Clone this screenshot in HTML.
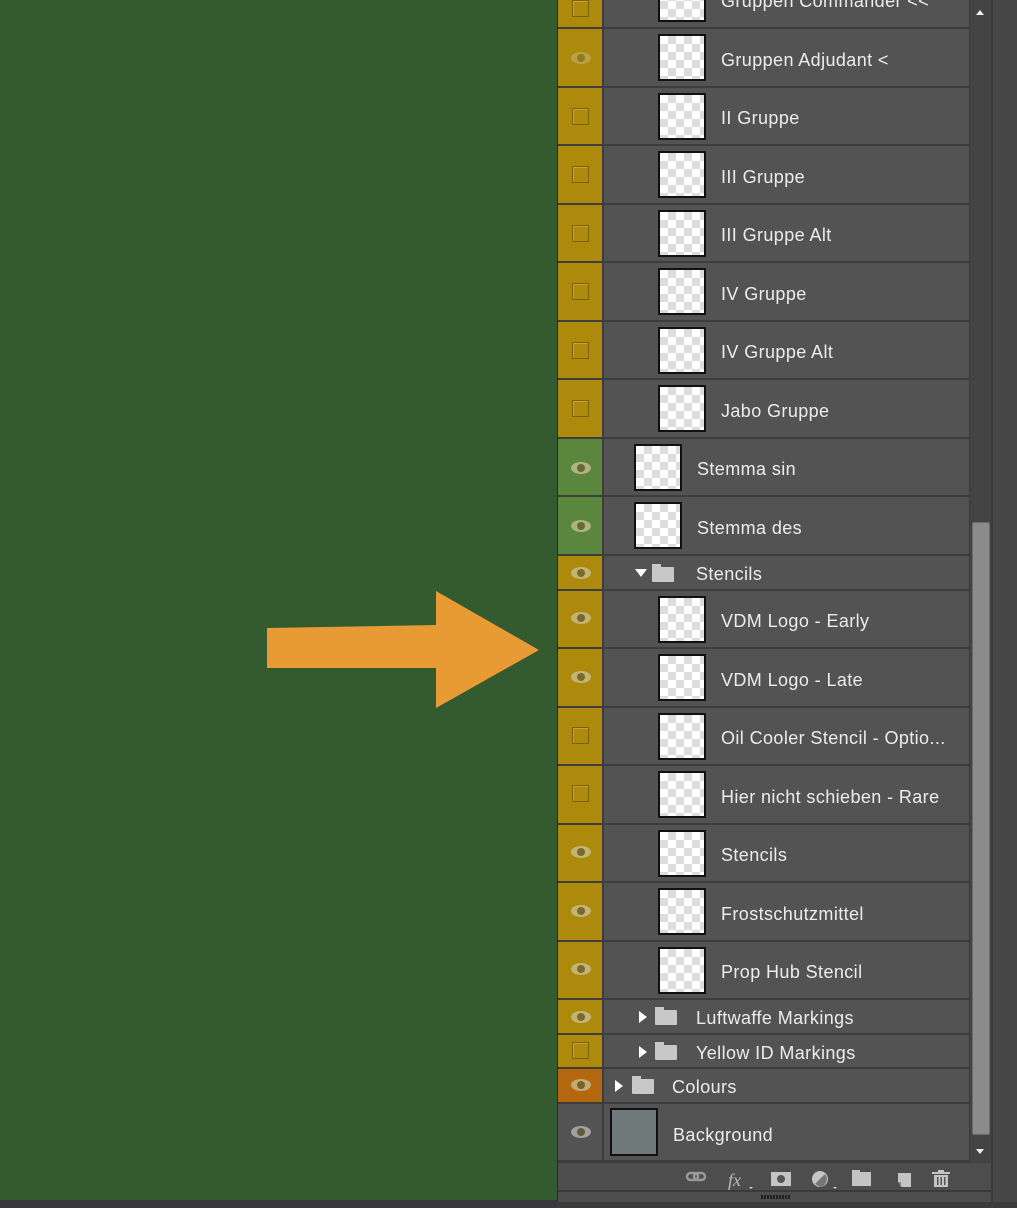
<!DOCTYPE html>
<html><head><meta charset="utf-8"><style>
*{margin:0;padding:0;box-sizing:border-box}
body{width:1017px;height:1208px;overflow:hidden;background:#345a2f;position:relative;font-family:"Liberation Sans",sans-serif}
.panel{position:absolute;left:557px;top:0;width:434px;height:1202px;background:#535353;overflow:hidden;border-left:1px solid #2a2a2a}
.row{position:absolute;left:0;width:411px;background:#535353;border-bottom:2px solid #3d3d3d}
.col{position:absolute;left:0;top:0;bottom:0;width:46px;border-right:2px solid #3d3d3d}
.y{background:#ad8a0c}.g{background:#5b863d}.o{background:#b3670f}.n{background:#535353}
.th{position:absolute;top:5px;width:48px;height:47px;border:2px solid #111;background-color:#fff;background-image:linear-gradient(45deg,#ddd 25%,transparent 25%,transparent 75%,#ddd 75%),linear-gradient(45deg,#ddd 25%,transparent 25%,transparent 75%,#ddd 75%);background-size:16px 16px;background-position:0 0,8px 8px}
.t{position:absolute;color:#ececec;font-size:18px;letter-spacing:0.4px;white-space:nowrap;margin-top:1px}
.eye{position:absolute;left:13px;width:20px;height:12px;border-radius:50%;background:#c9c29a;opacity:.75}
.eye:after{content:"";position:absolute;left:6px;top:2px;width:8px;height:8px;border-radius:50%;background:#6a6030}
.box{position:absolute;left:14px;width:17px;height:17px;border:1px solid #7a620a;box-shadow:inset 1px 1px 0 #c8a52a}
.fold{position:absolute;width:22px;height:15px;background:#c8c8c8;border-radius:1px}
.fold:before{content:"";position:absolute;left:0;top:-3px;width:9px;height:4px;background:#c8c8c8}
.tri{position:absolute;width:0;height:0;border-top:6px solid transparent;border-bottom:6px solid transparent;border-left:8px solid #fff}
.trid{position:absolute;width:0;height:0;border-left:6px solid transparent;border-right:6px solid transparent;border-top:8px solid #fff}
</style></head><body>
<svg style="position:absolute;left:0;top:0" width="557" height="1208"><polygon points="267,628 436,625 436,591 539,650 436,708 436,668 267,668" fill="#e89a35"/></svg>
<div class="panel">
<div class="row" style="top:-30px;height:59px"><div class="col y"><div class="box" style="top:30px"></div></div><div class="th" style="left:100px"></div><div class="t" style="left:163px;top:20px">Gruppen  Commander &lt;&lt;</div></div>
<div class="row" style="top:29px;height:59px"><div class="col y"><div class="eye" style="top:23px;opacity:.4"></div></div><div class="th" style="left:100px"></div><div class="t" style="left:163px;top:20px">Gruppen Adjudant &lt;</div></div>
<div class="row" style="top:88px;height:58px"><div class="col y"><div class="box" style="top:20px"></div></div><div class="th" style="left:100px"></div><div class="t" style="left:163px;top:19px">II Gruppe</div></div>
<div class="row" style="top:146px;height:59px"><div class="col y"><div class="box" style="top:20px"></div></div><div class="th" style="left:100px"></div><div class="t" style="left:163px;top:20px">III Gruppe</div></div>
<div class="row" style="top:205px;height:58px"><div class="col y"><div class="box" style="top:20px"></div></div><div class="th" style="left:100px"></div><div class="t" style="left:163px;top:19px">III Gruppe Alt</div></div>
<div class="row" style="top:263px;height:59px"><div class="col y"><div class="box" style="top:20px"></div></div><div class="th" style="left:100px"></div><div class="t" style="left:163px;top:20px">IV Gruppe</div></div>
<div class="row" style="top:322px;height:58px"><div class="col y"><div class="box" style="top:20px"></div></div><div class="th" style="left:100px"></div><div class="t" style="left:163px;top:19px">IV Gruppe Alt</div></div>
<div class="row" style="top:380px;height:59px"><div class="col y"><div class="box" style="top:20px"></div></div><div class="th" style="left:100px"></div><div class="t" style="left:163px;top:20px">Jabo Gruppe</div></div>
<div class="row" style="top:439px;height:58px"><div class="col g"><div class="eye" style="top:23px"></div></div><div class="th" style="left:76px"></div><div class="t" style="left:139px;top:19px">Stemma sin</div></div>
<div class="row" style="top:497px;height:59px"><div class="col g"><div class="eye" style="top:23px"></div></div><div class="th" style="left:76px"></div><div class="t" style="left:139px;top:20px">Stemma des</div></div>
<div class="row" style="top:556px;height:35px"><div class="col y"><div class="eye" style="top:11px"></div></div><div class="trid" style="left:77px;top:13px"></div><div class="fold" style="left:94px;top:11px"></div><div class="t" style="left:138px;top:7px">Stencils</div></div>
<div class="row" style="top:591px;height:58px"><div class="col y"><div class="eye" style="top:21px"></div></div><div class="th" style="left:100px"></div><div class="t" style="left:163px;top:19px">VDM Logo - Early</div></div>
<div class="row" style="top:649px;height:59px"><div class="col y"><div class="eye" style="top:22px"></div></div><div class="th" style="left:100px"></div><div class="t" style="left:163px;top:20px">VDM Logo - Late</div></div>
<div class="row" style="top:708px;height:58px"><div class="col y"><div class="box" style="top:19px"></div></div><div class="th" style="left:100px"></div><div class="t" style="left:163px;top:19px">Oil Cooler Stencil - Optio...</div></div>
<div class="row" style="top:766px;height:59px"><div class="col y"><div class="box" style="top:19px"></div></div><div class="th" style="left:100px"></div><div class="t" style="left:163px;top:20px">Hier nicht schieben - Rare</div></div>
<div class="row" style="top:825px;height:58px"><div class="col y"><div class="eye" style="top:21px"></div></div><div class="th" style="left:100px"></div><div class="t" style="left:163px;top:19px">Stencils</div></div>
<div class="row" style="top:883px;height:59px"><div class="col y"><div class="eye" style="top:22px"></div></div><div class="th" style="left:100px"></div><div class="t" style="left:163px;top:20px">Frostschutzmittel</div></div>
<div class="row" style="top:942px;height:58px"><div class="col y"><div class="eye" style="top:21px"></div></div><div class="th" style="left:100px"></div><div class="t" style="left:163px;top:19px">Prop Hub Stencil</div></div>
<div class="row" style="top:1000px;height:35px"><div class="col y"><div class="eye" style="top:11px"></div></div><div class="tri" style="left:81px;top:11px"></div><div class="fold" style="left:97px;top:10px"></div><div class="t" style="left:138px;top:7px">Luftwaffe Markings</div></div>
<div class="row" style="top:1035px;height:34px"><div class="col y"><div class="box" style="top:7px"></div></div><div class="tri" style="left:81px;top:11px"></div><div class="fold" style="left:97px;top:10px"></div><div class="t" style="left:138px;top:7px">Yellow ID Markings</div></div>
<div class="row" style="top:1069px;height:35px"><div class="col o"><div class="eye" style="top:10px"></div></div><div class="tri" style="left:57px;top:11px"></div><div class="fold" style="left:74px;top:10px"></div><div class="t" style="left:114px;top:7px">Colours</div></div>
<div class="row" style="top:1104px;height:59px;border-bottom:3px solid #3d3d3d"><div class="col n"><div class="eye" style="top:22px;background:#bbb"></div></div><div class="th" style="left:52px;top:4px;width:48px;height:48px;background:#717a7b"></div><div class="t" style="left:115px;top:20px">Background</div></div>
<div style="position:absolute;left:411px;top:0;width:23px;height:1163px;background:#444;border-left:1px solid #3a3a3a"></div>
<div style="position:absolute;left:414px;top:522px;width:18px;height:613px;background:#8b8b8b;border-radius:2px;border:1px solid #6a6a6a"></div>
<div style="position:absolute;left:418px;top:10px;width:0;height:0;border-left:4px solid transparent;border-right:4px solid transparent;border-bottom:5px solid #eee"></div>
<div style="position:absolute;left:418px;top:1149px;width:0;height:0;border-left:4px solid transparent;border-right:4px solid transparent;border-top:5px solid #eee"></div>
<div style="position:absolute;left:0;top:1163px;width:434px;height:29px;background:#4d4d4d;border-bottom:2px solid #3a3a3a"></div>
<svg style="position:absolute;left:0;top:1163px" width="434" height="29">
<g fill="none" stroke="#9a9a9a" stroke-width="2.5"><rect x="129" y="10" width="11" height="7" rx="3.5"/><rect x="136" y="10" width="11" height="7" rx="3.5"/></g>
<text x="170" y="23" fill="#b8b8b8" font-family="Liberation Serif" font-style="italic" font-size="18">fx</text>
<polygon points="191,24 195,24 193,26" fill="#ccc"/>
<rect x="213" y="9" width="20" height="14" fill="#c4c4c4"/><circle cx="223" cy="16" r="4" fill="#555"/>
<circle cx="262" cy="16" r="8" fill="#c4c4c4"/><path d="M257,21 L267,11 A8,8 0 0 1 262,24Z" fill="#777"/>
<polygon points="275,24 279,24 277,26" fill="#ccc"/>
<rect x="294" y="9" width="19" height="14" fill="#c4c4c4"/><rect x="294" y="7" width="8" height="3" fill="#c4c4c4"/>
<path d="M340,10 h13 v14 h-10 v-5 h-3z" fill="#c4c4c4"/><path d="M340,19 l3,0 l0,5 z" fill="#888"/>
<g fill="#c4c4c4"><rect x="374" y="9" width="18" height="2"/><rect x="380" y="7" width="6" height="2"/><rect x="376" y="12" width="14" height="12"/></g>
<g fill="#555"><rect x="379" y="14" width="1.5" height="8"/><rect x="382.5" y="14" width="1.5" height="8"/><rect x="386" y="14" width="1.5" height="8"/></g>
</svg>
<div style="position:absolute;left:0;top:1192px;width:434px;height:10px;background:#4d4d4d"></div>
<div style="position:absolute;left:203px;top:1195px;width:29px;height:4px;background:repeating-linear-gradient(90deg,#222 0 2px,transparent 2px 3px)"></div>
</div>
<div style="position:absolute;left:991px;top:0;width:26px;height:1208px;background:#464646;border-left:2px solid #3a3a3a"></div>
<div style="position:absolute;left:557px;top:1202px;width:460px;height:6px;background:#3b3b3b"></div>
<div style="position:absolute;left:0;top:1200px;width:557px;height:8px;background:#38383a"></div>
</body></html>
